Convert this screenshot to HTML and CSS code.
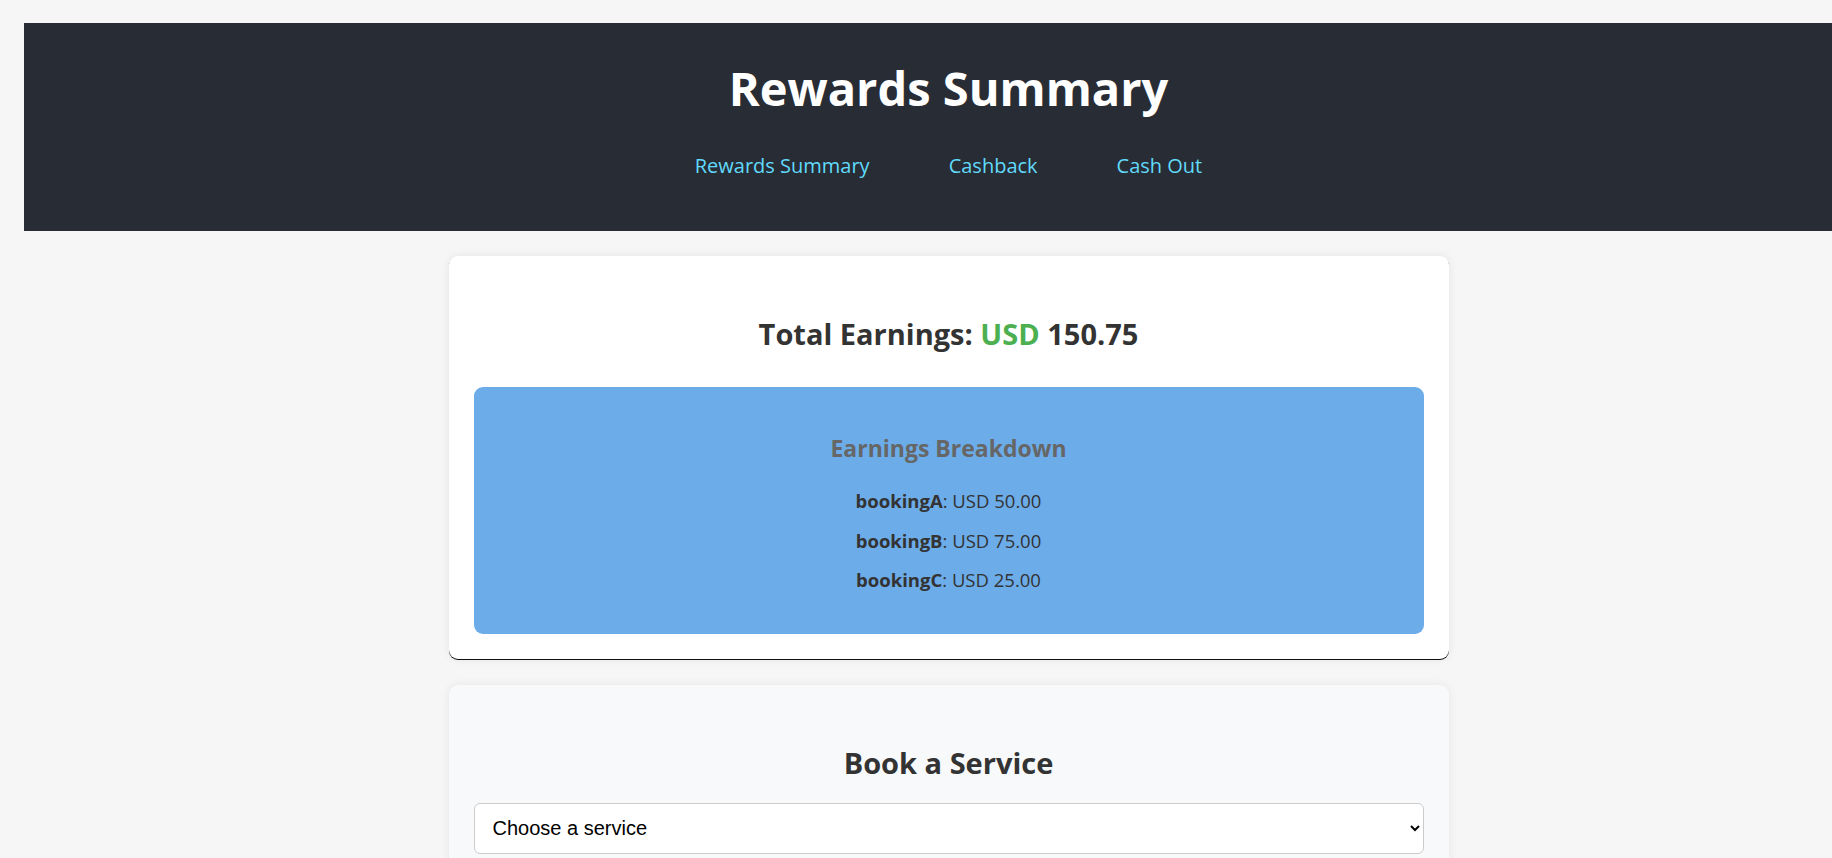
FILE: index.html
```html
<!DOCTYPE html>
<html lang="en">
<head>
<meta charset="utf-8">
<title>Rewards Summary</title>
<link rel="stylesheet" href="styles.css">
</head>
<body>
<div class="app">
  <header class="app-header">
    <h1 class="app-title">Rewards Summary</h1>
    <nav class="app-nav">
      <a href="#" class="nav-link">Rewards Summary</a>
      <a href="#" class="nav-link">Cashback</a>
      <a href="#" class="nav-link">Cash Out</a>
    </nav>
  </header>

  <main class="content">
    <section class="card card-summary">
      <h2 class="card-heading">Total Earnings: <span class="currency">USD</span> 150.75</h2>
      <div class="breakdown">
        <h3 class="breakdown-title">Earnings Breakdown</h3>
        <ul class="breakdown-list">
          <li><strong>bookingA</strong>: USD 50.00</li>
          <li><strong>bookingB</strong>: USD 75.00</li>
          <li><strong>bookingC</strong>: USD 25.00</li>
        </ul>
      </div>
    </section>

    <section class="card card-booking">
      <h2 class="card-heading booking-heading">Book a Service</h2>
      <select class="service-select">
        <option>Choose a service</option>
        <option>Hotel</option>
        <option>Flight</option>
      </select>
    </section>
  </main>
</div>
</body>
</html>
```

FILE: styles.css
```css
html {
  background:
    linear-gradient(to right, transparent 1810px, #282c34 1810px) 0 23px / 3000px 208px no-repeat,
    #f5f6f5;
}

body {
  margin: 8px;
  font-family: "Open Sans", "Noto Sans", sans-serif;
  color: #333;
}

.app {
  width: 1849px;
  padding: 15px 16px 0;
}

.app-header {
  background: #282c34;
  padding: 37px 0 52px;
  display: flex;
  flex-direction: column;
  align-items: center;
}

.app-title {
  margin: 0;
  color: #fff;
  font-size: 47px;
  line-height: 56px;
  font-weight: 700;
}

.app-nav {
  margin-top: 36px;
  display: flex;
  gap: 79px;
}

.nav-link {
  color: #61dafb;
  text-decoration: none;
  font-size: 20px;
  line-height: 27px;
}

.content {
  display: flex;
  flex-direction: column;
  align-items: center;
  gap: 26px;
  padding-top: 25px;
}

.card {
  box-sizing: border-box;
  width: 1000px;
  padding: 25px;
  border-radius: 9px;
  background: #fff;
}

.card-summary {
  box-shadow: 0 0 10px rgba(0, 0, 0, 0.08), 0 1px 0 #111;
}

.card-booking {
  background: #f8f9fa;
  box-shadow: 0 0 10px rgba(0, 0, 0, 0.07);
}

.card-heading {
  margin: 33px 0;
  text-align: center;
  font-size: 29px;
  line-height: 40px;
  font-weight: 700;
  color: #333;
}

.booking-heading {
  margin-bottom: 20px;
}

.currency {
  color: #4caf50;
}

.breakdown {
  background: #6cace9;
  border-radius: 9px;
  padding: 46px 25px 41px;
  text-align: center;
}

.breakdown-title {
  margin: 0 0 24px;
  font-size: 23px;
  line-height: 31px;
  color: #666;
  font-weight: 700;
}

.breakdown-list {
  list-style: none;
  margin: 0;
  padding: 0;
  display: flex;
  flex-direction: column;
  gap: 14px;
  font-size: 18.5px;
  line-height: 25.5px;
  color: #333;
}

.breakdown-list strong {
  font-weight: 700;
}

.service-select {
  display: block;
  width: 100%;
  height: 51px;
  box-sizing: border-box;
  padding: 0 14px;
  font-family: "Liberation Sans", Arial, sans-serif;
  font-size: 20px;
  color: #000;
  background: #fff;
  border: 1px solid #ccc;
  border-radius: 6px;
}
```
